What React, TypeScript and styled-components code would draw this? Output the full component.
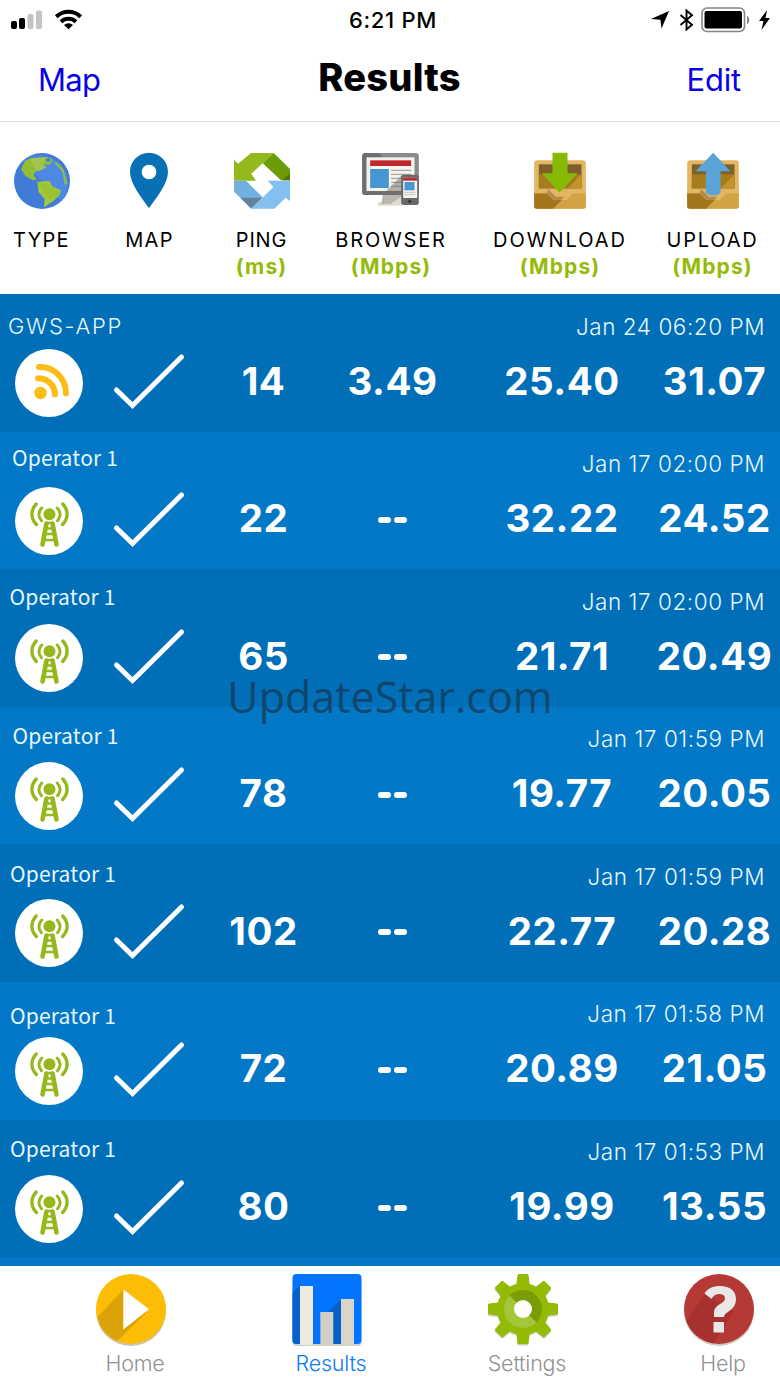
import React from 'react';
import styled, { createGlobalStyle } from 'styled-components';

const GlobalStyle = createGlobalStyle`
  * {
    box-sizing: border-box;
  }
  body {
    margin: 0;
    background: #fff;
    font-family: Inter, 'Liberation Sans', sans-serif;
  }
  svg {
    display: block;
    flex: none;
    overflow: visible;
  }
`;

const Screen = styled.div`
  position: relative;
  width: 780px;
  height: 1387px;
  display: flex;
  flex-direction: column;
  overflow: hidden;
  background: #fff;
`;

const StatusBar = styled.div`
  height: 40px;
  display: grid;
  grid-template-columns: 1fr auto 1fr;
  align-items: center;
  padding: 0 9px 0 11px;
`;

const StatusGroup = styled.div<{ $end?: boolean }>`
  display: flex;
  align-items: center;
  gap: ${p => (p.$end ? '9px' : '13px')};
  justify-content: ${p => (p.$end ? 'flex-end' : 'flex-start')};
`;

const Clock = styled.span`
  font-size: 22px;
  font-weight: 500;
  letter-spacing: 0.7px;
  padding-left: 4px;
`;

const NavBar = styled.div`
  height: 82px;
  display: flex;
  justify-content: space-between;
  align-items: center;
  padding: 0 39px 5px 38px;
  border-bottom: 1.5px solid #dcdcdc;
`;

const NavLink = styled.a`
  width: 90px;
  color: #0a00e6;
  font-size: 31px;
  letter-spacing: -0.7px;
  padding-top: 3px;
  &:last-child {
    text-align: right;
    letter-spacing: -0.2px;
  }
`;

const Title = styled.h1`
  margin: 0;
  font-size: 38px;
  font-weight: 800;
  letter-spacing: 0.2px;
  padding-bottom: 3px;
`;

const ColumnHeads = styled.div`
  height: 172px;
  display: grid;
  grid-template-columns: 83px 133px 91px 168px 170px 135px;
  padding-top: 31px;
`;

const ColumnHead = styled.div`
  display: flex;
  flex-direction: column;
  align-items: center;
  white-space: nowrap;
`;

const HeadIcon = styled.div`
  height: 73px;
`;

const HeadLabel = styled.span<{ $spacing: number }>`
  font-size: 20px;
  font-weight: 400;
  line-height: 28px;
  letter-spacing: ${p => p.$spacing}px;
  color: #000;
`;

const HeadUnit = styled.span`
  font-size: 21px;
  line-height: 26px;
  font-weight: 700;
  letter-spacing: 1.1px;
  color: #95bb0a;
`;

const List = styled.div`
  height: 972px;
  overflow: hidden;
`;

const Row = styled.div<{ $alt: boolean }>`
  height: 137.6px;
  background: ${p => (p.$alt ? '#0378c6' : '#006fb7')};
  color: #fff;
`;

const RowMeta = styled.div`
  height: 55px;
  display: flex;
  justify-content: space-between;
  padding-right: 15px;
`;

const Network = styled.span<{ $x: number; $y: number; $wide?: boolean }>`
  height: 26px;
  line-height: 26px;
  margin-left: ${p => p.$x}px;
  margin-top: ${p => p.$y}px;
  color: #e4f6ff;
  font-family: ${p => (p.$wide ? 'Inter, sans-serif' : "'Noto Sans CJK SC', sans-serif")};
  font-size: ${p => (p.$wide ? 22 : 21)}px;
  font-weight: ${p => (p.$wide ? 300 : 400)};
  letter-spacing: ${p => (p.$wide ? 1.7 : 0.2)}px;
`;

const Stamp = styled.span`
  line-height: 26px;
  margin-top: 19.5px;
  color: #e4f6ff;
  font-size: 22.5px;
  font-weight: 300;
  letter-spacing: 0.55px;
`;

const RowBody = styled.div`
  height: 68px;
  display: grid;
  grid-template-columns: 98px 102px 127px 131px 208px 97px;
`;

const Cell = styled.div`
  display: flex;
  justify-content: center;
  align-items: center;
`;

const Value = styled.span`
  flex: none;
  padding-bottom: 5px;
  font-size: 38.5px;
  font-weight: 700;
  letter-spacing: 0.5px;
`;

const Dash = styled.i`
  width: 13px;
  height: 6px;
  margin: 0 1.5px 2px;
  border-radius: 3px;
  background: #fff;
`;

const Badge = styled.div`
  width: 68px;
  height: 68px;
  border-radius: 50%;
  background: #fff;
  display: flex;
  justify-content: center;
  align-items: center;
`;

const TabBar = styled.nav`
  height: 121px;
  display: grid;
  grid-template-columns: repeat(4, 196px);
  padding-left: 33px;
  background: #fff;
`;

const Tab = styled.div<{ $active?: boolean }>`
  display: flex;
  flex-direction: column;
  align-items: center;
  padding-top: 8px;
  color: ${p => (p.$active ? '#0a7bf5' : '#929292')};
`;

const TabLabel = styled.span`
  margin: -1px 0 0 8px;
  font-size: 21.5px;
  font-weight: 300;
  line-height: 34px;
  letter-spacing: -0.2px;
`;

const Watermark = styled.div`
  position: absolute;
  left: 0;
  right: 0;
  top: 668px;
  line-height: 58px;
  text-align: center;
  font-family: 'Open Sans', sans-serif;
  font-size: 43px;
  color: rgba(28, 42, 58, 0.6);
  pointer-events: none;
`;

const SignalIcon = () => (
  <svg width="31" height="20" viewBox="0 0 31 20">
    <rect x="0" y="11" width="6" height="8" rx="2" />
    <rect x="8" y="8" width="6" height="11" rx="2" />
    <rect x="16.5" y="4" width="6" height="15" rx="2" fill="#c3c3c3" />
    <rect x="25" y="0.5" width="6" height="18.5" rx="2" fill="#c3c3c3" />
  </svg>
);

const WifiIcon = () => (
  <svg width="27" height="20" viewBox="0 0 27 20">
    <g fill="none" stroke="#000" strokeWidth="4">
      <path d="M1.3 6.8a17.4 17.4 0 0 1 24.4 0" />
      <path d="M6 11.8a11 11 0 0 1 15 0" />
    </g>
    <path d="M9 15a6.6 6.6 0 0 1 9 0l-4.5 4.2z" />
  </svg>
);

const StatusIcons = () => (
  <StatusGroup $end>
    <svg width="18" height="18" viewBox="1 0 18 18">
      <path d="M18 0L10.5 17.5 9.4 8.8 0 8z" />
    </svg>
    <svg width="14" height="22" viewBox="-1 0 14 22">
      <path d="M.5 6l11.5 9.8L6.5 20.5V1.5l5.500 4.700L.5 16" fill="none" stroke="#000" strokeWidth="1.9" />
    </svg>
    <svg width="49" height="26" viewBox="1 0 49 26">
      <rect x="1" y="1" width="42.5" height="23.5" rx="5" fill="#fff" stroke="#858585" strokeWidth="1.6" />
      <rect x="3.5" y="4" width="37.5" height="17.5" rx="2" />
      <path d="M46 9c3 1 3 7 0 8z" fill="#858585" />
    </svg>
    <svg width="11" height="20" viewBox="1 0 11 20">
      <path d="M8 0L0 11h4.5L2.5 20 11 8H6.5z" />
    </svg>
  </StatusGroup>
);

const GlobeIcon = () => (
  <svg width="56" height="56" viewBox="41 39 168 168">
    <circle cx="125" cy="123" r="84" fill="#417bd8" />
    <path d="M66 64A84 84 0 0 1 184 182L125 123z" fill="#5691ee" opacity=".6" />
    <path
      d="M74 64L90 55 137 51 157 58 150 73 128 75 139 82 121 91 104 95 100 106 110 119 97 120 75 108 62 88z"
      fill="#94bd36"
    />
    <path d="M90 56L137 52 130 66 128 75 139 82 121 91 108 94z" fill="#a2c54e" />
    <path d="M111 125L148 123 155 139 182 151 176 167 158 184 131 202 133 177 115 157z" fill="#a2c93b" />
    <path d="M111 125L182 151 176 167 151 184z" fill="#92bd28" opacity=".5" />
    <path d="M160 67l11 0 19 21 12 43-9 3-7-39z" fill="#8dbb4d" />
    <path d="M135 58l12-3 4 7-10 4z" fill="#417bd8" />
  </svg>
);

const PinIcon = () => (
  <svg width="38" height="56" viewBox="393 39 114 168">
    <path
      d="M447 38C416 38 390 63 390 95c0 37 36 78 57 110 21-32 57-73 57-110 0-32-26-57-57-57zm0 36a22 22 0 1 1 0 44 22 22 0 1 1 0-44z"
      fill="#0871b6"
      fillRule="evenodd"
    />
  </svg>
);

const PingIcon = () => (
  <svg width="56" height="56" viewBox="702 39 168 168">
    <path d="M753 39h68L788 70 754 101l14 21h-66V59l12 12z" fill="#93b91c" />
    <path d="M821 39l49 48v34h-27L788 70z" fill="#6d9c09" />
    <path d="M870 99v22h-23z" fill="#4f7601" />
    <path d="M702 122h36l50 50-34 33-52-50z" fill="#70b0de" />
    <path d="M721 173h66l-33 33z" fill="#62819b" />
    <path d="M754 206l66-65-17-19h67v62l-13-11-34 33z" fill="#83c0f0" />
  </svg>
);

const BrowserIcon = () => (
  <svg width="57" height="56" viewBox="128 39 170 168">
    <path d="M187 165h54l3 25v7h-72v-8l13-5z" fill="#dedbd2" />
    <path d="M187 165h54v7l-31 20h-27z" fill="#b9b7ad" />
    <rect x="125" y="39" width="170" height="126" rx="10" fill="#8a8a8a" />
    <path d="M135 39h40l106 126H135q-10 0-10-10V49q0-10 10-10z" fill="#6e6e6e" />
    <rect x="138" y="52" width="144" height="101" fill="#f4f3ee" />
    <rect x="149" y="61" width="123" height="17" fill="#c2272d" />
    <rect x="149" y="87" width="56" height="57" fill="#4596d2" />
    <path d="M212 91h60M212 103h60M212 115h60M212 127h60M212 139h60" stroke="#98968f" strokeWidth="3" />
    <path d="M245 104L197 153h50z" fill="#777" opacity=".55" />
    <rect x="242" y="104" width="53" height="91" rx="8" fill="#686868" />
    <rect x="248" y="113" width="42" height="61" fill="#f3f2ed" />
    <rect x="248" y="113" width="42" height="9" fill="#bd2b31" />
    <rect x="252" y="126" width="30" height="25" fill="#4797d3" />
    <path d="M252 157h33M252 164h33" stroke="#aaa" strokeWidth="2" />
    <circle cx="268" cy="184" r="5" fill="#333" />
  </svg>
);

const TrayIcon: React.FC<{ up?: boolean }> = ({ up }) => (
  <svg width="52" height="56" viewBox="641 39 155 168">
    <rect x="641" y="61" width="155" height="145" rx="9" fill="#e2b663" />
    <rect x="655" y="73" width="128" height="72" fill="#7d602a" />
    <path d="M655 103h128v42H655z" fill="#a67c1f" />
    <path d="M783 103v42h-38l-16 14z" fill="#c2942d" />
    <path d="M641 160h37l22 20h38l20-20h38v38q0 8-8 8H649q-8 0-8-8z" fill="#d2a342" />
    <path d="M641 160h37l22 20h24l-26 26h-49q-8 0-8-8z" fill="#a3761e" />
    <path d="M641 148h42l23 22h26l20-22h44v12h-38l-20 20h-38l-22-20h-37z" fill="#e2b663" />
    <path d="M683 148l23 22h26l-10 10h-22l-22-20z" fill="#b58c45" />
    {up ? (
      <path d="M719 38l52 56h-30v65l-10 7h-23l-11-7V94h-31z" fill="#5ba4d7" />
    ) : (
      <path d="M696 38h45v62h30l-54 58-53-58h32z" fill="#87ba05" />
    )}
  </svg>
);

const FeedIcon = () => (
  <svg width="68" height="68" viewBox="0 0 68 68">
    <g fill="none" stroke="#fdbc16" strokeWidth="6" strokeLinecap="round">
      <path d="M24 18c15-1 27 12 27 26.5" />
      <path d="M23 29.5c9-1 17 7 17 16" />
    </g>
    <circle cx="25.5" cy="44" r="6.2" fill="#fdbc16" />
  </svg>
);

const TowerIcon = () => (
  <svg width="68" height="68" viewBox="0 0 68 68">
    <g stroke="#95b81d" fill="none" strokeLinecap="round">
      <circle cx="34.5" cy="27.2" r="6" fill="#95b81d" stroke="none" />
      <path d="M26.8 21c-3.8 3.7-3.8 9-.3 12.7M42.200 21c3.8 3.7 3.8 9 .3 12.7" strokeWidth="3" />
      <path d="M21.2 17c-6 6.5-5.5 14.5.2 20.500M47.800 17c6 6.500 5.500 14.500-.2 20.500" strokeWidth="3.4" />
      <path d="M31.500 36.500L27.500 57.500M37.500 36.500L41.500 57.500" strokeWidth="4.600" />
      <path d="M31 36h7M31 41.500h7M30 47h9M29 53h11" strokeWidth="2.4" />
    </g>
  </svg>
);

const CheckIcon = () => (
  <svg width="70" height="56" viewBox="0 0 70 56">
    <path d="M2.5 35L18.5 50.5 67.5 2" fill="none" stroke="#fff" strokeWidth="5" strokeLinecap="round" />
  </svg>
);

const HomeIcon = () => (
  <svg width="70" height="73" viewBox="0 0 70 73">
    <circle cx="35" cy="37" r="35" fill="#c9c4b5" />
    <circle cx="35" cy="35" r="35" fill="#fdbd04" />
    <path d="M27 16L1.5 43A35 35 0 0 0 21 67l30-29z" fill="#dca20a" />
    <path d="M27.3 15.5L53 35.3 27.3 55.5z" fill="#fff" />
  </svg>
);

const ChartIcon = () => (
  <svg width="70" height="73" viewBox="0 0 70 73">
    <rect x=".5" y="3" width="69" height="69" rx="4" fill="#d3d0ca" />
    <rect x=".5" y="0" width="69" height="70" rx="4" fill="#0274ff" />
    <path d="M8 12L.5 19v47q0 4 4 4h45V25L28 46v24H8z" fill="#0560c8" />
    <rect x="8" y="12" width="13" height="59" fill="#eceadf" />
    <rect x="28.3" y="38" width="13" height="33" fill="#d2d0c4" />
    <rect x="49" y="25" width="13" height="46" fill="#d8d5cd" />
  </svg>
);

const GearTeeth = () => (
  <>
    {[0, 45, 90, 135, 180, 225, 270, 315].map(deg => (
      <path key={deg} d="M28 14L29.5 1Q29.7 0 31 0h8q1.3 0 1.5 1L42 14z" transform={`rotate(${deg} 35 35)`} />
    ))}
    <circle cx="35" cy="35" r="26" />
  </>
);

const GearIcon = () => (
  <svg width="70" height="73" viewBox="0 0 70 73">
    <g fill="#c9cdb9" transform="translate(0 1.5)">
      <GearTeeth />
    </g>
    <g fill="#93ba05">
      <GearTeeth />
    </g>
    <circle cx="35" cy="35" r="19" fill="#a4c63a" />
    <path d="M21.5 21.5A19 19 0 1 1 48.5 48.5z" fill="#7a9c05" />
    <circle cx="35" cy="35" r="9" fill="#fff" />
  </svg>
);

const HelpIcon = () => (
  <svg width="70" height="73" viewBox="0 0 70 73">
    <circle cx="35" cy="37" r="35" fill="#d0c9c5" />
    <circle cx="35" cy="35" r="35" fill="#b53935" />
    <path d="M21 20L2.5 47A35 35 0 0 0 29 69.5L50 37z" fill="#a2302e" opacity=".8" />
    <path
      d="M20.5 19.5C24 14 29 12 36 12c10 0 16 5 16 13 0 7-4 10-8 13-3 2-4 3-4 5H30v-4c0-5 3-7 6-9 3-2 5-3 5-5.5 0-3-2-4.5-5.5-4.5-4 0-6 1.5-8 5z"
      fill="#e9e7e7"
    />
    <rect x="29.5" y="48" width="10.5" height="10.5" fill="#e9e7e7" />
  </svg>
);

const columns = [
  { label: 'TYPE', unit: '', spacing: 1.3, icon: <GlobeIcon /> },
  { label: 'MAP', unit: '', spacing: 1.3, icon: <PinIcon /> },
  { label: 'PING', unit: '(ms)', spacing: 0.8, icon: <PingIcon /> },
  { label: 'BROWSER', unit: '(Mbps)', spacing: 1.8, icon: <BrowserIcon /> },
  { label: 'DOWNLOAD', unit: '(Mbps)', spacing: 2, icon: <TrayIcon /> },
  { label: 'UPLOAD', unit: '(Mbps)', spacing: 1.8, icon: <TrayIcon up /> },
];

interface Result {
  network: string;
  wifi?: boolean;
  x: number;
  y: number;
  time: string;
  ping: string;
  browser?: string;
  download: string;
  upload: string;
}

const results: Result[] = [
  { network: 'GWS-APP', wifi: true, x: 8, y: 19, time: 'Jan 24 06:20 PM', ping: '14', browser: '3.49', download: '25.40', upload: '31.07' },
  { network: 'Operator 1', x: 12, y: 12.5, time: 'Jan 17 02:00 PM', ping: '22', download: '32.22', upload: '24.52' },
  { network: 'Operator 1', x: 9.5, y: 14, time: 'Jan 17 02:00 PM', ping: '65', download: '21.71', upload: '20.49' },
  { network: 'Operator 1', x: 12.5, y: 15, time: 'Jan 17 01:59 PM', ping: '78', download: '19.77', upload: '20.05' },
  { network: 'Operator 1', x: 10, y: 15.5, time: 'Jan 17 01:59 PM', ping: '102', download: '22.77', upload: '20.28' },
  { network: 'Operator 1', x: 10, y: 20, time: 'Jan 17 01:58 PM', ping: '72', download: '20.89', upload: '21.05' },
  { network: 'Operator 1', x: 10, y: 15.5, time: 'Jan 17 01:53 PM', ping: '80', download: '19.99', upload: '13.55' },
];

const ResultRow: React.FC<{ result: Result; alt: boolean }> = ({ result, alt }) => (
  <Row $alt={alt}>
    <RowMeta>
      <Network $x={result.x} $y={result.y} $wide={result.wifi}>{result.network}</Network>
      <Stamp>{result.time}</Stamp>
    </RowMeta>
    <RowBody>
      <Cell>
        <Badge>{result.wifi ? <FeedIcon /> : <TowerIcon />}</Badge>
      </Cell>
      <Cell><CheckIcon /></Cell>
      <Cell><Value>{result.ping}</Value></Cell>
      <Cell>
        {result.browser ? <Value>{result.browser}</Value> : <><Dash /><Dash /></>}
      </Cell>
      <Cell><Value>{result.download}</Value></Cell>
      <Cell><Value>{result.upload}</Value></Cell>
    </RowBody>
  </Row>
);

const App = () => (
  <Screen>
    <GlobalStyle />
    <StatusBar>
      <StatusGroup>
        <SignalIcon />
        <WifiIcon />
      </StatusGroup>
      <Clock>6:21 PM</Clock>
      <StatusIcons />
    </StatusBar>
    <NavBar>
      <NavLink>Map</NavLink>
      <Title>Results</Title>
      <NavLink>Edit</NavLink>
    </NavBar>
    <ColumnHeads>
      {columns.map(col => (
        <ColumnHead key={col.label}>
          <HeadIcon>{col.icon}</HeadIcon>
          <HeadLabel $spacing={col.spacing}>{col.label}</HeadLabel>
          {col.unit && <HeadUnit>{col.unit}</HeadUnit>}
        </ColumnHead>
      ))}
    </ColumnHeads>
    <List>
      {results.map((result, i) => (
        <ResultRow key={i} result={result} alt={i % 2 === 1} />
      ))}
      <Row $alt />
    </List>
    <TabBar>
      <Tab>
        <HomeIcon />
        <TabLabel>Home</TabLabel>
      </Tab>
      <Tab $active>
        <ChartIcon />
        <TabLabel>Results</TabLabel>
      </Tab>
      <Tab>
        <GearIcon />
        <TabLabel>Settings</TabLabel>
      </Tab>
      <Tab>
        <HelpIcon />
        <TabLabel>Help</TabLabel>
      </Tab>
    </TabBar>
    <Watermark>UpdateStar.com</Watermark>
  </Screen>
);

export default App;
